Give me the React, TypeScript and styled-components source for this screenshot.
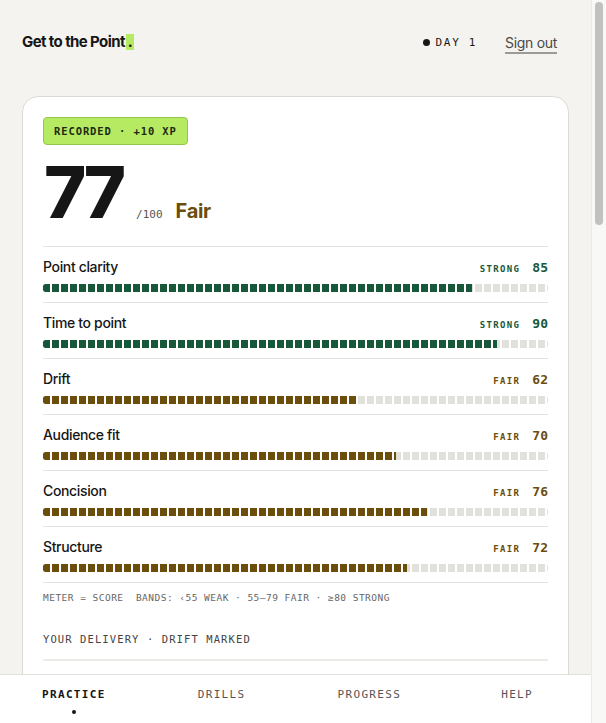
import React, { useLayoutEffect, useRef, useState } from "react";
import styled, { createGlobalStyle } from "styled-components";

const GlobalStyle = createGlobalStyle`
  html, body { margin: 0; padding: 0; height: 100%; overflow: hidden; }
  body {
    background: #f4f3ef;
    color: #161616;
    font-family: Inter, "Noto Sans", sans-serif;
    -webkit-font-smoothing: antialiased;
  }
  * { box-sizing: border-box; }
`;

const MONO = `"DejaVu Sans Mono", "Liberation Mono", monospace`;

const palette = {
  strong: "#17583a",
  fair: "#6b4d0c",
  weak: "#9a2b1f",
  empty: "#e2e1dc",
  lime: "#b6ea63",
  line: "#e5e3de",
};

type Band = "strong" | "fair" | "weak";

const Shell = styled.div`
  display: flex;
  height: 100vh;
`;

/* The app scrolls inside its own viewport; the rail beside it shows the position. */
const Viewport = styled.div`
  flex: 1;
  min-width: 0;
  height: 100%;
  overflow-y: auto;
  scrollbar-width: none;
  &::-webkit-scrollbar { display: none; }
`;

const Rail = styled.div`
  position: relative;
  width: 15px;
  flex: none;
  background: #f8f8f6;
  border-left: 1px solid #ebeae6;
`;

const Thumb = styled.div`
  position: absolute;
  left: 3px;
  right: 3px;
  border-radius: 4px;
  background: #c1c1c1;
`;

const Page = styled.div`
  padding: 0 22px 48px;
`;

const Header = styled.header`
  display: flex;
  align-items: center;
  height: 84px;
  padding-right: 12px;
`;

const Brand = styled.div`
  font-size: 15px;
  font-weight: 700;
  letter-spacing: -0.6px;
  line-height: 20px;
  flex: 1;
`;

const BrandDot = styled.span`
  display: inline-block;
  background: ${palette.lime};
  padding: 0 2px;
  margin-left: 1px;
  line-height: 16px;
`;

const DayTag = styled.div`
  display: flex;
  align-items: center;
  gap: 6px;
  font-family: ${MONO};
  font-size: 11px;
  letter-spacing: 0.15em;
  color: #1a1a1a;
  margin-right: 28px;
`;

const Bullet = styled.span`
  width: 7px;
  height: 7px;
  border-radius: 50%;
  background: #161616;
`;

const SignOut = styled.a`
  font-size: 14px;
  color: #4a4a4a;
  letter-spacing: -0.3px;
  text-decoration: underline;
  text-decoration-color: #9a9a9a;
  text-decoration-thickness: 1.5px;
  text-underline-offset: 4px;
  cursor: pointer;
`;

const Card = styled.section`
  margin-top: 12px;
  background: #fff;
  border: 1px solid #dcdad4;
  border-radius: 16px;
  padding: 20px 20px 40px;
`;

const Badge = styled.span`
  display: inline-block;
  background: ${palette.lime};
  border: 1px solid #95c74a;
  border-radius: 4px;
  padding: 0 10px;
  height: 28px;
  line-height: 26px;
  font-family: ${MONO};
  font-size: 10.5px;
  font-weight: 700;
  letter-spacing: 0.9px;
  color: #1d2a10;
`;

const ScoreLine = styled.div`
  display: flex;
  align-items: baseline;
  margin-top: 11px;
  margin-bottom: 18px;
`;

const BigScore = styled.span`
  font-size: 72px;
  line-height: 1;
  font-weight: 800;
  letter-spacing: -4px;
  margin-left: 1px;
`;

const OutOf = styled.span`
  font-family: ${MONO};
  font-size: 11px;
  color: #555;
  margin-left: 14px;
`;

const Verdict = styled.span<{ $band: Band }>`
  font-size: 20px;
  font-weight: 700;
  letter-spacing: -0.3px;
  color: ${(p) => palette[p.$band]};
  margin-left: 13px;
`;

const Metrics = styled.div`
  border-top: 1px solid ${palette.line};
`;

const MetricRow = styled.div`
  display: grid;
  grid-template-columns: 1fr auto;
  align-items: center;
  row-gap: 7px;
  padding: 10px 0;
  border-bottom: 1px solid ${palette.line};
`;

const MetricName = styled.span`
  font-size: 14px;
  font-weight: 500;
  letter-spacing: -0.35px;
  line-height: 20px;
`;

const MetricScore = styled.span<{ $band: Band }>`
  display: flex;
  align-items: baseline;
  gap: 12px;
  color: ${(p) => palette[p.$band]};
  font-family: ${MONO};
`;

const BandLabel = styled.span`
  font-size: 9px;
  letter-spacing: 0.15em;
  font-weight: 600;
`;

const ScoreNum = styled.span`
  font-size: 13px;
  font-weight: 700;
`;

const Meter = styled.div<{ $band: Band }>`
  grid-column: 1 / -1;
  height: 8px;
  border-radius: 2px;
  background: linear-gradient(
    to right,
    ${(p) => palette[p.$band]} 0 var(--fill),
    ${palette.empty} var(--fill) 100%
  );
  -webkit-mask-image: repeating-linear-gradient(to right, #000 0 7px, transparent 7px 9px);
  mask-image: repeating-linear-gradient(to right, #000 0 7px, transparent 7px 9px);
`;

const Note = styled.p`
  margin: 9px 0 0;
  font-family: ${MONO};
  font-size: 9.5px;
  letter-spacing: 0.05em;
  color: #666;
  line-height: 12px;
  white-space: pre;
`;

const SectionLabel = styled.h3`
  margin: 28px 0 0;
  padding-bottom: 13px;
  border-bottom: 2px solid #ecebe7;
  font-family: ${MONO};
  font-size: 10.5px;
  font-weight: 500;
  letter-spacing: 1.1px;
  color: #444;
  line-height: 14px;
`;

const Transcript = styled.div`
  padding-top: 18px;
  font-size: 16px;
  line-height: 1.75;
  color: #262626;
  letter-spacing: -0.2px;
  p { margin: 0 0 18px; }
`;

const Drift = styled.mark`
  background: #f6e7b8;
  color: #5a3f06;
  border-bottom: 2px solid #c49a2c;
  padding: 0 2px;
`;

const FixList = styled.ol`
  margin: 0;
  padding: 18px 0 0 20px;
  font-size: 15px;
  line-height: 1.6;
  color: #2a2a2a;
  li { margin-bottom: 14px; }
`;

const AttemptRow = styled.div`
  display: grid;
  grid-template-columns: 1fr auto auto;
  align-items: center;
  gap: 16px;
  height: 52px;
  border-bottom: 1px solid ${palette.line};
  font-size: 14px;
`;

const AttemptTopic = styled.span`
  font-weight: 500;
  letter-spacing: -0.3px;
`;

const AttemptMeta = styled.span`
  font-family: ${MONO};
  font-size: 10px;
  letter-spacing: 0.1em;
  color: #777;
`;

const Retry = styled.button`
  margin-top: 28px;
  width: 100%;
  height: 48px;
  border: 0;
  border-radius: 10px;
  background: #161616;
  color: #fff;
  font-family: ${MONO};
  font-size: 12px;
  font-weight: 700;
  letter-spacing: 0.15em;
`;

const Nav = styled.nav`
  position: sticky;
  bottom: 0;
  height: 49px;
  background: #fff;
  border-top: 1px solid #e2e0db;
  display: grid;
  grid-template-columns: repeat(4, 1fr);
`;

const NavItem = styled.a<{ $active?: boolean }>`
  display: flex;
  flex-direction: column;
  align-items: center;
  padding-top: 14px;
  gap: 9px;
  font-family: ${MONO};
  font-size: 11px;
  letter-spacing: 0.12em;
  font-weight: ${(p) => (p.$active ? 700 : 500)};
  color: ${(p) => (p.$active ? "#161616" : "#555")};
  line-height: 12px;
  &::after {
    content: "";
    width: 4px;
    height: 4px;
    border-radius: 50%;
    background: ${(p) => (p.$active ? "#161616" : "transparent")};
  }
`;

const metrics: { name: string; band: Band; score: number }[] = [
  { name: "Point clarity", band: "strong", score: 85 },
  { name: "Time to point", band: "strong", score: 90 },
  { name: "Drift", band: "fair", score: 62 },
  { name: "Audience fit", band: "fair", score: 70 },
  { name: "Concision", band: "fair", score: 76 },
  { name: "Structure", band: "fair", score: 72 },
];

const attempts: { topic: string; length: string; band: Band; score: number }[] = [
  { topic: "Move the launch to March", length: "1:42", band: "fair", score: 77 },
  { topic: "Hire a second support lead", length: "2:05", band: "fair", score: 64 },
  { topic: "Sunset the legacy dashboard", length: "1:18", band: "strong", score: 82 },
  { topic: "Quarterly budget request", length: "2:31", band: "weak", score: 51 },
  { topic: "Introduce yourself to the team", length: "0:58", band: "strong", score: 88 },
];

const bandName: Record<Band, string> = { strong: "STRONG", fair: "FAIR", weak: "WEAK" };

function useScrollThumb(ref: React.RefObject<HTMLDivElement | null>) {
  const [thumb, setThumb] = useState({ top: 2, height: 0 });
  useLayoutEffect(() => {
    const el = ref.current;
    if (!el) return;
    const update = () => {
      const track = el.clientHeight - 4;
      const ratio = el.clientHeight / el.scrollHeight;
      const height = Math.max(24, track * ratio);
      const max = el.scrollHeight - el.clientHeight;
      const top = 2 + (max > 0 ? (el.scrollTop / max) * (track - height) : 0);
      setThumb({ top, height: ratio >= 1 ? 0 : height });
    };
    update();
    el.addEventListener("scroll", update);
    window.addEventListener("resize", update);
    return () => {
      el.removeEventListener("scroll", update);
      window.removeEventListener("resize", update);
    };
  }, [ref]);
  return thumb;
}

export default function App() {
  const viewRef = useRef<HTMLDivElement>(null);
  const thumb = useScrollThumb(viewRef);

  return (
    <>
      <GlobalStyle />
      <Shell>
        <Viewport ref={viewRef}>
          <Page>
            <Header>
              <Brand>
                Get to the Point<BrandDot>.</BrandDot>
              </Brand>
              <DayTag>
                <Bullet />
                DAY 1
              </DayTag>
              <SignOut>Sign out</SignOut>
            </Header>

            <Card>
              <Badge>RECORDED · +10 XP</Badge>
              <ScoreLine>
                <BigScore>77</BigScore>
                <OutOf>/100</OutOf>
                <Verdict $band="fair">Fair</Verdict>
              </ScoreLine>

              <Metrics>
                {metrics.map((m) => (
                  <MetricRow key={m.name}>
                    <MetricName>{m.name}</MetricName>
                    <MetricScore $band={m.band}>
                      <BandLabel>{bandName[m.band]}</BandLabel>
                      <ScoreNum>{m.score}</ScoreNum>
                    </MetricScore>
                    <Meter
                      $band={m.band}
                      style={{ ["--fill" as string]: `${m.score}%` } as React.CSSProperties}
                    />
                  </MetricRow>
                ))}
              </Metrics>

              <Note>{"METER = SCORE  BANDS: ‹55 WEAK · 55–79 FAIR · ≥80 STRONG"}</Note>

              <SectionLabel>YOUR DELIVERY · DRIFT MARKED</SectionLabel>
              <Transcript>
                <p>
                  We should move the launch to March. The February date puts us two weeks
                  before the billing migration finishes, and that means support takes the hit
                  for both at once.
                </p>
                <p>
                  <Drift>
                    I mean, the migration has been slipping since last quarter anyway, and
                    honestly a lot of that is because the vendor changed their API twice, which
                    nobody really saw coming, and we had to rebuild the sync job from scratch.
                  </Drift>
                </p>
                <p>
                  So the ask is simple: approve a four-week shift. Marketing keeps the same
                  campaign, we keep the same scope, and support gets a clean runway to handle
                  one change at a time instead of two.
                </p>
                <p>
                  <Drift>
                    There was also a thought about splitting the launch into regions, but that
                    got complicated with the pricing pages and the translations, so we parked
                    it for now and might revisit it later in the year.
                  </Drift>
                </p>
                <p>
                  If we hold February, I expect ticket volume to roughly double in the first
                  week. If we move to March, we stay inside our current staffing and keep
                  response times under a day.
                </p>
                <p>
                  That is the whole decision. I need a yes or no by Friday so the campaign
                  team can re-book their slots.
                </p>
              </Transcript>

              <SectionLabel>WHAT TO FIX NEXT</SectionLabel>
              <FixList>
                <li>Cut the vendor backstory. It explains the delay but doesn't support the ask.</li>
                <li>Drop the regional split aside, or give it one sentence after the decision.</li>
                <li>Lead with the cost of saying no: double ticket volume in week one.</li>
                <li>Close on the deadline. “Yes or no by Friday” was your strongest line.</li>
              </FixList>

              <SectionLabel>SUGGESTED REWRITE</SectionLabel>
              <Transcript>
                <p>
                  Move the launch to March. Holding February doubles support tickets in the
                  first week because it lands on top of the billing migration. March keeps the
                  same scope and campaign, and keeps us inside current staffing. I need a yes
                  or no by Friday.
                </p>
                <p>
                  Twelve seconds shorter, one idea per sentence, and the ask comes first.
                </p>
              </Transcript>

              <SectionLabel>RECENT ATTEMPTS</SectionLabel>
              {attempts.map((a) => (
                <AttemptRow key={a.topic}>
                  <AttemptTopic>{a.topic}</AttemptTopic>
                  <AttemptMeta>{a.length}</AttemptMeta>
                  <MetricScore $band={a.band}>
                    <BandLabel>{bandName[a.band]}</BandLabel>
                    <ScoreNum>{a.score}</ScoreNum>
                  </MetricScore>
                </AttemptRow>
              ))}

              <Retry>RECORD AGAIN</Retry>
            </Card>
          </Page>

          <Nav>
            <NavItem $active>PRACTICE</NavItem>
            <NavItem>DRILLS</NavItem>
            <NavItem>PROGRESS</NavItem>
            <NavItem>HELP</NavItem>
          </Nav>
        </Viewport>
        <Rail aria-hidden>
          <Thumb style={{ top: thumb.top, height: thumb.height }} />
        </Rail>
      </Shell>
    </>
  );
}
